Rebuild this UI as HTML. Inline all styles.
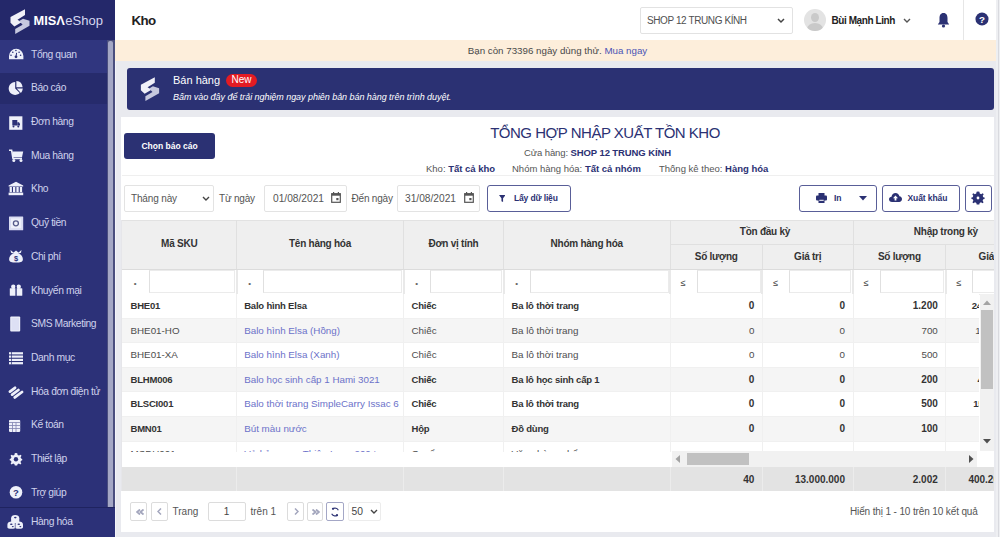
<!DOCTYPE html>
<html><head><meta charset="utf-8"><style>
*{box-sizing:border-box;margin:0;padding:0}
html,body{width:1000px;height:537px;overflow:hidden}
body{position:relative;background:#e9eaef;font-family:"Liberation Sans", sans-serif;color:#333;}
.abs{position:absolute}
#sb{position:absolute;left:0;top:0;width:115px;height:537px;background:#2c3178;overflow:hidden}
#sbh{position:absolute;left:0;top:0;width:115px;height:40px;background:#24286a}
.mi{position:absolute;left:0;width:107px;height:33.6px}
.mi .ic{position:absolute;left:7.7px;top:8.8px;width:16px;height:16px;line-height:0}
.mi .lb{position:absolute;left:31px;top:0.2px;line-height:33.6px;font-size:10.3px;letter-spacing:-0.4px;color:#cfd2ec;white-space:nowrap}
#sbscroll{position:absolute;left:107px;top:40px;width:7.7px;height:467px;background:#4a4e7e}
#sbthumb{position:absolute;left:107.6px;top:40.5px;width:5.4px;height:466.5px;background:#a4a7c5;border-radius:2px 2px 0 0}
#hdr{position:absolute;left:115px;top:0;width:885px;height:40px;background:#fff}
#trial{position:absolute;left:115px;top:40px;width:885px;height:21px;background:#fdeedb;font-size:9.75px;color:#4a4a4a;text-align:center;line-height:21px}
#banner{position:absolute;left:127px;top:68px;width:867px;height:42px;background:#2b3173;border-radius:3px}
#card{position:absolute;left:122px;top:117px;width:872px;height:415px;background:#fff}
.btnp{position:absolute;background:#2b3173;color:#fff;border-radius:3px;font-weight:bold;text-align:center}
.inp{position:absolute;border:1px solid #e3e3e3;border-radius:2px;background:#fff;font-size:10px;color:#555}
.obtn{position:absolute;border:1px solid #595e98;border-radius:3px;background:#fff;color:#2b3173;font-weight:bold;font-size:8.5px}
</style></head><body>
<div id="sb">
<div id="sbh"><div class="abs" style="left:10px;top:8.5px;line-height:0"><svg width="20" height="25" viewBox="10 8.5 20 25"><path d="M25 8.8 L25 14.6 L17.5 19.2 L21.5 21.8 L14.4 26 L10.5 22.2 L10.5 16.6 Z" fill="#f0f0f8"/><path d="M23 18.2 L29.5 20.3 L29.5 25.3 L15.2 33.4 L15.2 28.6 L22.6 24.2 L19.2 20.4 Z" fill="#c6c8de"/></svg></div>
<div class="abs" style="left:33.5px;top:12.5px;font-size:12.8px;color:#fff;line-height:16px;white-space:nowrap"><b>MISΛ</b><span style="font-size:13px;color:#d6d8f0;margin-left:0.5px">eShop</span></div></div>
<div class="abs" style="left:0;top:39.7px;width:107px;height:33.5px;background:#30367f"></div><div class="mi" style="top:37.5px;"><span class="ic"><svg width="16" height="16" viewBox="0 0 16 16"><path d="M1 13.3 V10 A7.2 7.2 0 0 1 15.4 10 V13.3 Z" fill="#eef0fa"/><circle cx="7.9" cy="4.5" r=".8" fill="#2c3178"/><circle cx="4.8" cy="6.3" r=".8" fill="#2c3178"/><circle cx="11.1" cy="6.3" r=".8" fill="#2c3178"/><circle cx="3" cy="9.3" r=".8" fill="#2c3178"/><circle cx="12.6" cy="9.3" r=".8" fill="#2c3178"/><circle cx="8" cy="10.8" r="1.4" fill="#2c3178"/><path d="M8 10.8 L8.6 6.8" stroke="#2c3178" stroke-width="1"/></svg></span><span class="lb">Tổng quan</span></div><div class="abs" style="left:0;top:73.2px;width:107px;height:30.5px;background:#262b6c"></div><div class="mi" style="top:71.2px;"><span class="ic"><svg width="16" height="16" viewBox="0 0 16 16"><path d="M7.2 1.9 A6.5 6.5 0 1 0 11.8 13 L7.2 8.4 Z" fill="#eef0fa"/><path d="M8.4 1.1 A6.8 6.8 0 0 1 14.6 7.3 L8.4 7.3 Z" fill="#eef0fa"/><path d="M8.8 8.6 L14.8 8.6 A6.8 6.8 0 0 1 12.9 12.9 Z" fill="#eef0fa"/></svg></span><span class="lb">Báo cáo</span></div><div class="mi" style="top:104.9px;"><span class="ic"><svg width="16" height="16" viewBox="0 0 16 16"><rect x="1.2" y="2.3" width="13.2" height="13.5" fill="#eef0fa"/><rect x="4.3" y="6" width="5" height="5.5" fill="#2c3178"/><path d="M9.3 8.3 H11 L12 10 V11.5 H9.3Z" fill="#2c3178"/><circle cx="5.5" cy="12.5" r="1" fill="#2c3178"/><circle cx="10.3" cy="12.5" r="1" fill="#2c3178"/></svg></span><span class="lb">Đơn hàng</span></div><div class="mi" style="top:138.6px;"><span class="ic"><svg width="16" height="16" viewBox="0 0 16 16"><path d="M1 3.2 H3.6 L5 11.5 H14" fill="none" stroke="#eef0fa" stroke-width="1.6"/><path d="M4.2 4.6 H15.2 L14 10.2 H5.1 Z" fill="#eef0fa"/><circle cx="5.8" cy="13.6" r="1.5" fill="#eef0fa"/><circle cx="13" cy="13.6" r="1.5" fill="#eef0fa"/></svg></span><span class="lb">Mua hàng</span></div><div class="mi" style="top:172.3px;"><span class="ic"><svg width="16" height="16" viewBox="0 0 16 16"><path d="M8 0.8 L15.2 4.6 V5.6 H0.6 V4.6 Z" fill="#eef0fa"/><rect x="1.6" y="6" width="2.3" height="5.2" fill="#eef0fa"/><rect x="5" y="6" width="2.3" height="5.2" fill="#eef0fa"/><rect x="8.4" y="6" width="2.3" height="5.2" fill="#eef0fa"/><rect x="11.8" y="6" width="2.3" height="5.2" fill="#eef0fa"/><rect x="0.6" y="11.6" width="14.6" height="2.6" fill="#eef0fa"/></svg></span><span class="lb">Kho</span></div><div class="mi" style="top:206.0px;"><span class="ic"><svg width="16" height="16" viewBox="0 0 16 16"><rect x="1" y="1.4" width="14.2" height="13.8" rx=".5" fill="#d9dcf2"/><rect x="3" y="3.4" width="10.2" height="9.8" fill="#eef0fa"/><circle cx="7.9" cy="8.3" r="2.5" fill="none" stroke="#555a8a" stroke-width="1.3"/></svg></span><span class="lb">Quỹ tiền</span></div><div class="mi" style="top:239.7px;"><span class="ic"><svg width="16" height="16" viewBox="0 0 16 16"><path d="M2.5 2 L5.5 4.5 L8 2.5 L10.5 4.5 L13.5 2 L13 4.8 L9.5 6 L6.5 6 L3 4.8 Z" fill="#eef0fa"/><path d="M5.5 5.5 C2 6.5 0.8 10 1.2 12 C1.6 14 3.5 14.5 8 14.5 C12.5 14.5 14.4 14 14.8 12 C15.2 10 14 6.5 10.5 5.5 Z" fill="#eef0fa"/><text x="8" y="13.2" font-size="7.5" text-anchor="middle" fill="#2c3178" font-family="Liberation Sans" font-weight="bold">$</text></svg></span><span class="lb">Chi phí</span></div><div class="mi" style="top:273.4px;"><span class="ic"><svg width="16" height="16" viewBox="0 0 16 16"><circle cx="5.3" cy="4.7" r="2.2" fill="#eef0fa"/><circle cx="10.7" cy="4.7" r="2.2" fill="#eef0fa"/><rect x="1.8" y="6.2" width="12.5" height="7.6" rx=".6" fill="#eef0fa"/><rect x="7.4" y="4.5" width="1.3" height="9.5" fill="#2c3178"/></svg></span><span class="lb">Khuyến mại</span></div><div class="mi" style="top:307.1px;"><span class="ic"><svg width="16" height="16" viewBox="0 0 16 16"><rect x="2.2" y="0.4" width="10" height="15.2" rx="1" fill="#eef0fa"/><rect x="3.4" y="1.8" width="7.6" height="12.6" fill="#dde0f4"/></svg></span><span class="lb">SMS Marketing</span></div><div class="mi" style="top:340.8px;"><span class="ic"><svg width="16" height="16" viewBox="0 0 16 16"><rect x="1" y="2.2" width="14" height="2.2" fill="#eef0fa"/><rect x="1" y="5.5" width="14" height="2.2" fill="#eef0fa"/><rect x="1" y="8.8" width="14" height="2.2" fill="#eef0fa"/><rect x="1" y="12.1" width="14" height="2.2" fill="#eef0fa"/><rect x="3.2" y="2" width=".7" height="12.5" fill="#2c3178"/></svg></span><span class="lb">Danh mục</span></div><div class="mi" style="top:374.5px;"><span class="ic"><svg width="16" height="16" viewBox="0 0 16 16"><path d="M2 8.6 L7 4.8 M4.2 11.6 L10.4 7 M6.8 14.4 L14 9" stroke="#eef0fa" stroke-width="2.8" stroke-linecap="round"/></svg></span><span class="lb">Hóa đơn điện tử</span></div><div class="mi" style="top:408.2px;"><span class="ic"><svg width="16" height="16" viewBox="0 0 16 16"><rect x="1" y="2.9" width="11.2" height="12" rx=".8" fill="#eef0fa"/><path d="M1 5.5 H12.2 M1 8.5 H12.2 M1 11.5 H12.2 M4.5 5.5 V15 M8 5.5 V15" stroke="#7d81b0" stroke-width=".8"/></svg></span><span class="lb">Kế toán</span></div><div class="mi" style="top:441.9px;"><span class="ic"><svg width="16" height="16" viewBox="0 0 16 16"><g transform="translate(1 1.3) scale(.87)"><path d="M8 0.8 L9.5 1 L9.9 3 L11.5 3.8 L13.3 2.7 L14.4 3.9 L13.3 5.6 L13.9 7.2 L15.2 7.6 L15.2 9.2 L13.9 9.6 L13.2 11.2 L14.2 12.9 L13 14 L11.3 13 L9.8 13.7 L9.4 15.2 L6.7 15.2 L6.3 13.7 L4.8 13 L3 14 L1.9 12.9 L2.9 11.2 L2.2 9.6 L0.8 9.2 L0.8 7.6 L2.2 7.2 L2.8 5.6 L1.8 3.9 L2.9 2.7 L4.6 3.8 L6.2 3 L6.6 1 Z" fill="#eef0fa"/><circle cx="8" cy="8" r="2.5" fill="#2c3178"/></g></svg></span><span class="lb">Thiết lập</span></div><div class="mi" style="top:475.6px;"><span class="ic"><svg width="16" height="16" viewBox="0 0 16 16"><circle cx="8" cy="8.3" r="6.3" fill="#eef0fa"/><text x="8" y="11.9" font-size="9.5" text-anchor="middle" fill="#2c3178" font-family="Liberation Sans" font-weight="bold">?</text></svg></span><span class="lb">Trợ giúp</span></div>
<div id="sbscroll"></div><div id="sbthumb"></div>
<div class="abs" style="left:0;top:507px;width:115px;height:1px;background:#1f2360"></div>
<div class="mi" style="top:508px;width:115px;height:29px;background:#2c3178"><span class="ic" style="left:7px;top:5.5px;width:16px"><svg width="16" height="16" viewBox="0 0 16 16"><path d="M8.2 1 C10.5 1 12.3 2 12.3 4.2 V7.5 C12.3 8.8 10.5 9 8.2 9 C5.9 9 4.1 8.8 4.1 7.5 V4.2 C4.1 2 5.9 1 8.2 1Z" fill="#eef0fa"/><path d="M4.5 7.5 C6.8 7.5 8.6 8.5 8.6 10.7 V13.2 C8.6 14.5 6.8 14.7 4.5 14.7 C2.2 14.7 0.4 14.5 0.4 13.2 V10.7 C0.4 8.5 2.2 7.5 4.5 7.5Z" fill="#eef0fa"/><path d="M12 7.5 C14.3 7.5 16 8.5 16 10.7 V13.2 C16 14.5 14.3 14.7 12 14.7 C9.7 14.7 7.9 14.5 7.9 13.2 V10.7 C7.9 8.5 9.7 7.5 12 7.5Z" fill="#eef0fa"/><ellipse cx="8.3" cy="3.6" rx="1.3" ry=".8" fill="#2c3178"/><ellipse cx="4.3" cy="10.3" rx="1.3" ry=".8" fill="#2c3178"/><ellipse cx="11.8" cy="10.3" rx="1.3" ry=".8" fill="#2c3178"/><ellipse cx="5.8" cy="12.6" rx="1" ry=".7" fill="#2c3178"/><ellipse cx="13.3" cy="12.6" rx="1" ry=".7" fill="#2c3178"/><path d="M8.25 9 V14.7" stroke="#2c3178" stroke-width=".6"/></svg></span><span class="lb" style="line-height:27px">Hàng hóa</span></div>
</div>
<div id="hdr">
<div class="abs" style="left:16.4px;top:13px;font-size:13.3px;font-weight:bold;color:#222;line-height:16px;letter-spacing:-0.5px">Kho</div>
<div class="abs" style="left:525px;top:7px;width:153px;height:27px;border:1px solid #e2e2e2;border-radius:2px"></div>
<div class="abs" style="left:532px;top:15px;font-size:10px;color:#505050;line-height:12px;letter-spacing:-0.4px;white-space:nowrap">SHOP 12 TRUNG KÍNH</div>
<svg class="abs" style="left:662px;top:18px" width="8" height="6" viewBox="0 0 8 6"><path d="M1 1 L4 4 L7 1" stroke="#444" stroke-width="1.5" fill="none"/></svg>
<div class="abs" style="left:689px;top:9px;width:22px;height:22px;border-radius:50%;background:#e3e3e3;overflow:hidden"><div class="abs" style="left:7px;top:4px;width:8px;height:9px;border-radius:50%;background:#c9c9c9"></div><div class="abs" style="left:3px;top:14px;width:16px;height:12px;border-radius:50%;background:#c9c9c9"></div></div>
<div class="abs" style="left:716.5px;top:14.5px;font-size:10px;font-weight:bold;color:#222;line-height:12px;white-space:nowrap;letter-spacing:-0.42px">Bùi Mạnh Linh</div>
<svg class="abs" style="left:788px;top:18px" width="8" height="6" viewBox="0 0 8 6"><path d="M1 1 L4 4 L7 1" stroke="#555" stroke-width="1.4" fill="none"/></svg>
<svg class="abs" style="left:822px;top:12px" width="13" height="16" viewBox="0 0 13 16"><path d="M6.5 1 C3.5 1 2.5 3.5 2.5 6 L2.5 10 L0.8 12.5 L12.2 12.5 L10.5 10 L10.5 6 C10.5 3.5 9.5 1 6.5 1Z" fill="#2b3173"/><circle cx="6.5" cy="14" r="1.6" fill="#2b3173"/></svg>
<div class="abs" style="left:848px;top:0;width:1px;height:40px;background:#e6e6e6"></div>
<svg class="abs" style="left:859.5px;top:12.3px" width="14" height="14" viewBox="0 0 15 15"><circle cx="7.5" cy="7.5" r="7" fill="#2b3173"/><text x="7.5" y="11.3" font-size="10.5" text-anchor="middle" fill="#fff" font-family="Liberation Sans" font-weight="bold">?</text></svg>
</div>
<div id="trial">Bạn còn 73396 ngày dùng thử. <span style="color:#4b55b5">Mua ngay</span></div>
<div id="banner">
<div class="abs" style="left:13px;top:9px;line-height:0"><svg width="20" height="24" viewBox="10 8.5 20 25"><path d="M25 8.8 L25 14.6 L17.5 19.2 L21.5 21.8 L14.4 26 L10.5 22.2 L10.5 16.6 Z" fill="#f0f0f8"/><path d="M23 18.2 L29.5 20.3 L29.5 25.3 L15.2 33.4 L15.2 28.6 L22.6 24.2 L19.2 20.4 Z" fill="#c6c8de"/></svg></div>
<div class="abs" style="left:46px;top:6px;font-size:11px;color:#fff;line-height:13px">Bán hàng</div>
<div class="abs" style="left:99px;top:6px;width:31px;height:12.5px;border-radius:7px;background:#e31b23;color:#fff;font-size:10px;line-height:12.5px;text-align:center">New</div>
<div class="abs" style="left:46px;top:23px;font-size:9px;font-style:italic;color:#fff;line-height:12px;white-space:nowrap;letter-spacing:-0.05px">Bấm vào đây để trải nghiệm ngay phiên bản bán hàng trên trình duyệt.</div>
</div>
<div class="abs" style="left:114.7px;top:61px;width:1.5px;height:476px;background:#f4f4f9"></div><div class="abs" style="left:120.5px;top:117.3px;width:873.5px;height:414.5px;background:#fff"></div><div class="abs" style="left:120.5px;top:220px;width:1.5px;height:271px;background:#e6e6ea"></div><div class="btnp" style="left:124px;top:133px;width:91px;height:26px;font-size:8.5px;line-height:26px">Chọn báo cáo</div><div class="abs" style="left:422px;top:124px;width:366px;text-align:center;font-size:15px;color:#2b3173;line-height:18px;letter-spacing:-0.5px;white-space:nowrap">TỔNG HỢP NHẬP XUẤT TỒN KHO</div><div class="abs" style="left:524px;top:147px;font-size:9.5px;color:#555;line-height:12px;white-space:nowrap;letter-spacing:-0.1px">Cửa hàng: <b style="color:#2b3173">SHOP 12 TRUNG KÍNH</b></div><div class="abs" style="left:426px;top:163px;font-size:9.5px;color:#555;line-height:12px;white-space:nowrap">Kho: <b style="color:#2b3173">Tất cả kho</b></div><div class="abs" style="left:512px;top:163px;font-size:9.5px;color:#555;line-height:12px;white-space:nowrap">Nhóm hàng hóa: <b style="color:#2b3173">Tất cả nhóm</b></div><div class="abs" style="left:659px;top:163px;font-size:9.5px;color:#555;line-height:12px;white-space:nowrap">Thống kê theo: <b style="color:#2b3173">Hàng hóa</b></div><div class="abs" style="left:122px;top:175px;width:872px;height:1px;background:#efefef"></div><div class="inp" style="left:124px;top:185px;width:90px;height:26.5px"></div><div class="abs" style="left:131px;top:193px;font-size:10px;color:#555;line-height:12px;white-space:nowrap;letter-spacing:-0.15px">Tháng này</div><svg class="abs" style="left:202px;top:196px" width="8" height="6" viewBox="0 0 8 6"><path d="M1 1 L4 4 L7 1" stroke="#444" stroke-width="1.4" fill="none"/></svg><div class="abs" style="left:219px;top:193px;font-size:10px;color:#555;line-height:12px;white-space:nowrap;letter-spacing:-0.2px">Từ ngày</div><div class="inp" style="left:264px;top:185px;width:83px;height:26.5px"></div><div class="abs" style="left:273px;top:193px;font-size:10.2px;color:#555;line-height:12px;white-space:nowrap">01/08/2021</div><svg class="abs" style="left:331px;top:192px" width="10" height="11" viewBox="0 0 10 11"><rect x="0.7" y="1.7" width="8.6" height="8.6" fill="none" stroke="#555" stroke-width="1.2"/><rect x="0.7" y="1.7" width="8.6" height="2" fill="#555"/><rect x="2" y="0" width="1.2" height="2" fill="#555"/><rect x="6.8" y="0" width="1.2" height="2" fill="#555"/><rect x="5.3" y="6" width="2.2" height="2.2" fill="#555"/></svg><div class="abs" style="left:351.5px;top:193px;font-size:10px;color:#555;line-height:12px;white-space:nowrap;letter-spacing:-0.2px">Đến ngày</div><div class="inp" style="left:397px;top:185px;width:83px;height:26.5px"></div><div class="abs" style="left:405px;top:193px;font-size:10.2px;color:#555;line-height:12px;white-space:nowrap">31/08/2021</div><svg class="abs" style="left:464px;top:192px" width="10" height="11" viewBox="0 0 10 11"><rect x="0.7" y="1.7" width="8.6" height="8.6" fill="none" stroke="#555" stroke-width="1.2"/><rect x="0.7" y="1.7" width="8.6" height="2" fill="#555"/><rect x="2" y="0" width="1.2" height="2" fill="#555"/><rect x="6.8" y="0" width="1.2" height="2" fill="#555"/><rect x="5.3" y="6" width="2.2" height="2.2" fill="#555"/></svg><div class="obtn" style="left:487px;top:185px;width:84px;height:27px"></div><svg class="abs" style="left:498.5px;top:195px" width="6.5" height="7.5" viewBox="0 0 8 9"><path d="M0 0 H8 L5 4 V8.5 L3 7.5 V4 Z" fill="#2b3173"/></svg><div class="abs" style="left:514px;top:192px;font-size:8.5px;font-weight:bold;color:#2b3173;line-height:12px;white-space:nowrap;letter-spacing:-0.15px">Lấy dữ liệu</div><div class="obtn" style="left:798.8px;top:185px;width:77.8px;height:26.5px"></div><svg class="abs" style="left:816px;top:193px" width="11" height="10" viewBox="0 0 11 10"><rect x="2.5" y="0" width="6" height="3" fill="#2b3173"/><rect x="0" y="2.5" width="11" height="5" rx="1" fill="#2b3173"/><rect x="2.5" y="6" width="6" height="4" fill="#2b3173"/><rect x="3.3" y="6.8" width="4.4" height="1" fill="#fff"/></svg><div class="abs" style="left:834px;top:192px;font-size:8.5px;font-weight:bold;color:#2b3173;line-height:12px">In</div><svg class="abs" style="left:859px;top:196px" width="8" height="5" viewBox="0 0 8 5"><path d="M0 0 H8 L4 4.5 Z" fill="#2b3173"/></svg><div class="obtn" style="left:882px;top:185px;width:78px;height:26.5px"></div><svg class="abs" style="left:889px;top:193px" width="13" height="9" viewBox="0 0 13 9"><path d="M3 9 C1 9 0 7.8 0 6.3 C0 4.8 1.2 3.8 2.5 3.8 C2.8 1.6 4.5 0 6.5 0 C8.6 0 10 1.4 10.4 3.2 C12 3.3 13 4.6 13 6.1 C13 7.7 11.8 9 10.2 9 Z" fill="#2b3173"/><path d="M6.5 2.5 L9 5.2 L7.4 5.2 L7.4 7.5 L5.6 7.5 L5.6 5.2 L4 5.2 Z" fill="#fff"/></svg><div class="abs" style="left:907.5px;top:192px;font-size:8.5px;font-weight:bold;color:#2b3173;line-height:12px;white-space:nowrap;letter-spacing:-0.1px">Xuất khẩu</div><div class="obtn" style="left:965px;top:185px;width:26.5px;height:26.5px"></div><svg class="abs" style="left:971px;top:191px" width="14" height="14" viewBox="0 0 16 16"><path d="M8 0.5 L9.6 0.8 L10 2.9 L11.6 3.6 L13.4 2.5 L14.5 3.7 L13.4 5.5 L14 7 L15.5 7.4 L15.5 9 L14 9.4 L13.3 11 L14.4 12.8 L13.2 14 L11.4 12.9 L9.9 13.6 L9.5 15.5 L6.5 15.5 L6.1 13.6 L4.6 12.9 L2.8 14 L1.6 12.8 L2.7 11 L2 9.4 L0.5 9 L0.5 7.4 L2 7 L2.6 5.5 L1.5 3.7 L2.6 2.5 L4.4 3.6 L6 2.9 L6.4 0.8 Z" fill="#2b3173"/><circle cx="8" cy="8" r="1.6" fill="#fff"/></svg><div class="abs" style="left:122px;top:220px;width:871.5px;height:271px;overflow:hidden"><div class="abs" style="left:0.00px;top:0.00px;width:978.00px;height:49.50px;background:#efefef"></div><div class="abs" style="left:0.00px;top:0.00px;width:978.00px;height:1.00px;background:#e2e2e2"></div><div class="abs" style="left:0.00px;width:114.50px;text-align:center;top:-1.00px;height:49.50px;line-height:49.50px;white-space:nowrap;font-size:10px;font-weight:bold;color:#333;letter-spacing:-0.25px">Mã SKU</div><div class="abs" style="left:114.00px;top:0.00px;width:1.00px;height:49.50px;background:#e0e0e0"></div><div class="abs" style="left:114.50px;width:167.00px;text-align:center;top:-1.00px;height:49.50px;line-height:49.50px;white-space:nowrap;font-size:10px;font-weight:bold;color:#333;letter-spacing:-0.25px">Tên hàng hóa</div><div class="abs" style="left:281.00px;top:0.00px;width:1.00px;height:49.50px;background:#e0e0e0"></div><div class="abs" style="left:281.50px;width:100.00px;text-align:center;top:-1.00px;height:49.50px;line-height:49.50px;white-space:nowrap;font-size:10px;font-weight:bold;color:#333;letter-spacing:-0.25px">Đơn vị tính</div><div class="abs" style="left:381.00px;top:0.00px;width:1.00px;height:49.50px;background:#e0e0e0"></div><div class="abs" style="left:381.50px;width:166.50px;text-align:center;top:-1.00px;height:49.50px;line-height:49.50px;white-space:nowrap;font-size:10px;font-weight:bold;color:#333;letter-spacing:-0.25px">Nhóm hàng hóa</div><div class="abs" style="left:547.50px;top:0.00px;width:1.00px;height:49.50px;background:#e0e0e0"></div><div class="abs" style="left:551.50px;width:183.00px;text-align:center;top:-0.50px;height:24.50px;line-height:24.50px;white-space:nowrap;font-size:10px;font-weight:bold;color:#333;letter-spacing:-0.25px">Tồn đầu kỳ</div><div class="abs" style="left:548.00px;top:24.00px;width:183.00px;height:1.00px;background:#e0e0e0"></div><div class="abs" style="left:730.50px;top:0.00px;width:1.00px;height:49.50px;background:#e0e0e0"></div><div class="abs" style="left:731.00px;width:185.60px;text-align:center;top:-0.50px;height:24.50px;line-height:24.50px;white-space:nowrap;font-size:10px;font-weight:bold;color:#333;letter-spacing:-0.25px">Nhập trong kỳ</div><div class="abs" style="left:731.00px;top:24.00px;width:185.60px;height:1.00px;background:#e0e0e0"></div><div class="abs" style="left:916.10px;top:0.00px;width:1.00px;height:49.50px;background:#e0e0e0"></div><div class="abs" style="left:548.00px;width:92.40px;text-align:center;top:24.00px;height:25.00px;line-height:25.00px;white-space:nowrap;font-size:10px;font-weight:bold;color:#333;letter-spacing:-0.25px">Số lượng</div><div class="abs" style="left:639.90px;top:24.50px;width:1.00px;height:25.00px;background:#e0e0e0"></div><div class="abs" style="left:640.40px;width:90.60px;text-align:center;top:24.00px;height:25.00px;line-height:25.00px;white-space:nowrap;font-size:10px;font-weight:bold;color:#333;letter-spacing:-0.25px">Giá trị</div><div class="abs" style="left:730.50px;top:24.50px;width:1.00px;height:25.00px;background:#e0e0e0"></div><div class="abs" style="left:731.00px;width:92.80px;text-align:center;top:24.00px;height:25.00px;line-height:25.00px;white-space:nowrap;font-size:10px;font-weight:bold;color:#333;letter-spacing:-0.25px">Số lượng</div><div class="abs" style="left:823.30px;top:24.50px;width:1.00px;height:25.00px;background:#e0e0e0"></div><div class="abs" style="left:823.80px;width:92.80px;text-align:center;top:24.00px;height:25.00px;line-height:25.00px;white-space:nowrap;font-size:10px;font-weight:bold;color:#333;letter-spacing:-0.25px">Giá trị</div><div class="abs" style="left:916.10px;top:24.50px;width:1.00px;height:25.00px;background:#e0e0e0"></div><div class="abs" style="left:0.00px;top:49.00px;width:978.00px;height:1.00px;background:#dcdcdc"></div><div class="abs" style="left:0.00px;top:50.00px;width:978.00px;height:24.00px;background:#fff"></div><div class="abs" style="left:26.50px;top:50.00px;width:86.50px;height:22.50px;border:1px solid #ebebeb;border-left:1.5px solid #e0e0e0;background:#fff"></div><div class="abs" style="left:113.50px;top:49.50px;width:2.00px;height:24.50px;background:#e9e9e9"></div><div class="abs" style="left:0.00px;width:26.50px;text-align:center;top:52.00px;height:23.50px;line-height:23.50px;white-space:nowrap;font-size:8px;color:#666">•</div><div class="abs" style="left:141.00px;top:50.00px;width:139.00px;height:22.50px;border:1px solid #ebebeb;border-left:1.5px solid #e0e0e0;background:#fff"></div><div class="abs" style="left:280.50px;top:49.50px;width:2.00px;height:24.50px;background:#e9e9e9"></div><div class="abs" style="left:114.50px;width:26.50px;text-align:center;top:52.00px;height:23.50px;line-height:23.50px;white-space:nowrap;font-size:8px;color:#666">•</div><div class="abs" style="left:308.00px;top:50.00px;width:72.00px;height:22.50px;border:1px solid #ebebeb;border-left:1.5px solid #e0e0e0;background:#fff"></div><div class="abs" style="left:380.50px;top:49.50px;width:2.00px;height:24.50px;background:#e9e9e9"></div><div class="abs" style="left:281.50px;width:26.50px;text-align:center;top:52.00px;height:23.50px;line-height:23.50px;white-space:nowrap;font-size:8px;color:#666">•</div><div class="abs" style="left:408.00px;top:50.00px;width:138.50px;height:22.50px;border:1px solid #ebebeb;border-left:1.5px solid #e0e0e0;background:#fff"></div><div class="abs" style="left:547.00px;top:49.50px;width:2.00px;height:24.50px;background:#e9e9e9"></div><div class="abs" style="left:381.50px;width:26.50px;text-align:center;top:52.00px;height:23.50px;line-height:23.50px;white-space:nowrap;font-size:8px;color:#666">•</div><div class="abs" style="left:574.50px;top:50.00px;width:64.40px;height:22.50px;border:1px solid #ebebeb;border-left:1.5px solid #e0e0e0;background:#fff"></div><div class="abs" style="left:639.40px;top:49.50px;width:2.00px;height:24.50px;background:#e9e9e9"></div><div class="abs" style="left:548.00px;width:26.50px;text-align:center;top:52.00px;height:23.50px;line-height:23.50px;white-space:nowrap;font-size:9px;color:#444">≤</div><div class="abs" style="left:666.90px;top:50.00px;width:62.60px;height:22.50px;border:1px solid #ebebeb;border-left:1.5px solid #e0e0e0;background:#fff"></div><div class="abs" style="left:730.00px;top:49.50px;width:2.00px;height:24.50px;background:#e9e9e9"></div><div class="abs" style="left:640.40px;width:26.50px;text-align:center;top:52.00px;height:23.50px;line-height:23.50px;white-space:nowrap;font-size:9px;color:#444">≤</div><div class="abs" style="left:757.50px;top:50.00px;width:64.80px;height:22.50px;border:1px solid #ebebeb;border-left:1.5px solid #e0e0e0;background:#fff"></div><div class="abs" style="left:822.80px;top:49.50px;width:2.00px;height:24.50px;background:#e9e9e9"></div><div class="abs" style="left:731.00px;width:26.50px;text-align:center;top:52.00px;height:23.50px;line-height:23.50px;white-space:nowrap;font-size:9px;color:#444">≤</div><div class="abs" style="left:850.30px;top:50.00px;width:64.80px;height:22.50px;border:1px solid #ebebeb;border-left:1.5px solid #e0e0e0;background:#fff"></div><div class="abs" style="left:915.60px;top:49.50px;width:2.00px;height:24.50px;background:#e9e9e9"></div><div class="abs" style="left:823.80px;width:26.50px;text-align:center;top:52.00px;height:23.50px;line-height:23.50px;white-space:nowrap;font-size:9px;color:#444">≤</div><div class="abs" style="left:0.00px;top:73.50px;width:978.00px;height:1.00px;background:#ececec"></div><div class="abs" style="left:0;top:74px;width:857px;height:158px;overflow:hidden"><div class="abs" style="left:0;top:0.00px;width:857px;height:24.60px;background:#fff;border-bottom:1px solid #f0f0f0"></div><div class="abs" style="left:114.00px;top:0.00px;width:1px;height:24.60px;background:#f0f0f0"></div><div class="abs" style="left:281.00px;top:0.00px;width:1px;height:24.60px;background:#f0f0f0"></div><div class="abs" style="left:381.00px;top:0.00px;width:1px;height:24.60px;background:#f0f0f0"></div><div class="abs" style="left:547.50px;top:0.00px;width:1px;height:24.60px;background:#f0f0f0"></div><div class="abs" style="left:639.90px;top:0.00px;width:1px;height:24.60px;background:#f0f0f0"></div><div class="abs" style="left:730.50px;top:0.00px;width:1px;height:24.60px;background:#f0f0f0"></div><div class="abs" style="left:823.30px;top:0.00px;width:1px;height:24.60px;background:#f0f0f0"></div><div class="abs" style="left:916.10px;top:0.00px;width:1px;height:24.60px;background:#f0f0f0"></div><div class="abs" style="left:8.50px;top:0.00px;height:24.60px;line-height:24.60px;white-space:nowrap;font-size:9.5px;font-weight:bold;color:#333;letter-spacing:-0.2px">BHE01</div><div class="abs" style="left:122.20px;top:0.00px;height:24.60px;line-height:24.60px;white-space:nowrap;font-size:9.5px;font-weight:bold;color:#333;letter-spacing:-0.2px">Balo hình Elsa</div><div class="abs" style="left:289.50px;top:0.00px;height:24.60px;line-height:24.60px;white-space:nowrap;font-size:9.5px;font-weight:bold;color:#333;letter-spacing:-0.2px">Chiếc</div><div class="abs" style="left:389.50px;top:0.00px;height:24.60px;line-height:24.60px;white-space:nowrap;font-size:9.5px;font-weight:bold;color:#333;letter-spacing:-0.2px">Ba lô thời trang</div><div class="abs" style="right:224.60px;top:0.00px;height:24.60px;line-height:24.60px;white-space:nowrap;font-size:10px;font-weight:bold;color:#333">0</div><div class="abs" style="right:134.00px;top:0.00px;height:24.60px;line-height:24.60px;white-space:nowrap;font-size:10px;font-weight:bold;color:#333">0</div><div class="abs" style="right:41.20px;top:0.00px;height:24.60px;line-height:24.60px;white-space:nowrap;font-size:10px;font-weight:bold;color:#333">1.200</div><div class="abs" style="left:849.70px;top:0.00px;height:24.60px;line-height:24.60px;white-space:nowrap;font-size:9.5px;font-weight:bold;color:#333;letter-spacing:-0.2px">240.000.000</div><div class="abs" style="left:0;top:24.60px;width:857px;height:24.60px;background:#f5f5f5;border-bottom:1px solid #f0f0f0"></div><div class="abs" style="left:114.00px;top:24.60px;width:1px;height:24.60px;background:#f0f0f0"></div><div class="abs" style="left:281.00px;top:24.60px;width:1px;height:24.60px;background:#f0f0f0"></div><div class="abs" style="left:381.00px;top:24.60px;width:1px;height:24.60px;background:#f0f0f0"></div><div class="abs" style="left:547.50px;top:24.60px;width:1px;height:24.60px;background:#f0f0f0"></div><div class="abs" style="left:639.90px;top:24.60px;width:1px;height:24.60px;background:#f0f0f0"></div><div class="abs" style="left:730.50px;top:24.60px;width:1px;height:24.60px;background:#f0f0f0"></div><div class="abs" style="left:823.30px;top:24.60px;width:1px;height:24.60px;background:#f0f0f0"></div><div class="abs" style="left:916.10px;top:24.60px;width:1px;height:24.60px;background:#f0f0f0"></div><div class="abs" style="left:8.50px;top:24.60px;height:24.60px;line-height:24.60px;white-space:nowrap;font-size:9.8px;font-weight:normal;color:#4d4d4d;letter-spacing:0">BHE01-HO</div><div class="abs" style="left:122.20px;top:24.60px;height:24.60px;line-height:24.60px;white-space:nowrap;font-size:9.8px;color:#6c72c9">Balo hình Elsa (Hồng)</div><div class="abs" style="left:289.50px;top:24.60px;height:24.60px;line-height:24.60px;white-space:nowrap;font-size:9.8px;font-weight:normal;color:#4d4d4d;letter-spacing:0">Chiếc</div><div class="abs" style="left:389.50px;top:24.60px;height:24.60px;line-height:24.60px;white-space:nowrap;font-size:9.8px;font-weight:normal;color:#4d4d4d;letter-spacing:0">Ba lô thời trang</div><div class="abs" style="right:224.60px;top:24.60px;height:24.60px;line-height:24.60px;white-space:nowrap;font-size:9.8px;font-weight:normal;color:#4d4d4d">0</div><div class="abs" style="right:134.00px;top:24.60px;height:24.60px;line-height:24.60px;white-space:nowrap;font-size:9.8px;font-weight:normal;color:#4d4d4d">0</div><div class="abs" style="right:41.20px;top:24.60px;height:24.60px;line-height:24.60px;white-space:nowrap;font-size:9.8px;font-weight:normal;color:#4d4d4d">700</div><div class="abs" style="left:853.30px;top:24.60px;height:24.60px;line-height:24.60px;white-space:nowrap;font-size:9.8px;font-weight:normal;color:#4d4d4d;letter-spacing:0">140.000.000</div><div class="abs" style="left:0;top:49.20px;width:857px;height:24.60px;background:#fff;border-bottom:1px solid #f0f0f0"></div><div class="abs" style="left:114.00px;top:49.20px;width:1px;height:24.60px;background:#f0f0f0"></div><div class="abs" style="left:281.00px;top:49.20px;width:1px;height:24.60px;background:#f0f0f0"></div><div class="abs" style="left:381.00px;top:49.20px;width:1px;height:24.60px;background:#f0f0f0"></div><div class="abs" style="left:547.50px;top:49.20px;width:1px;height:24.60px;background:#f0f0f0"></div><div class="abs" style="left:639.90px;top:49.20px;width:1px;height:24.60px;background:#f0f0f0"></div><div class="abs" style="left:730.50px;top:49.20px;width:1px;height:24.60px;background:#f0f0f0"></div><div class="abs" style="left:823.30px;top:49.20px;width:1px;height:24.60px;background:#f0f0f0"></div><div class="abs" style="left:916.10px;top:49.20px;width:1px;height:24.60px;background:#f0f0f0"></div><div class="abs" style="left:8.50px;top:49.20px;height:24.60px;line-height:24.60px;white-space:nowrap;font-size:9.8px;font-weight:normal;color:#4d4d4d;letter-spacing:0">BHE01-XA</div><div class="abs" style="left:122.20px;top:49.20px;height:24.60px;line-height:24.60px;white-space:nowrap;font-size:9.8px;color:#6c72c9">Balo hình Elsa (Xanh)</div><div class="abs" style="left:289.50px;top:49.20px;height:24.60px;line-height:24.60px;white-space:nowrap;font-size:9.8px;font-weight:normal;color:#4d4d4d;letter-spacing:0">Chiếc</div><div class="abs" style="left:389.50px;top:49.20px;height:24.60px;line-height:24.60px;white-space:nowrap;font-size:9.8px;font-weight:normal;color:#4d4d4d;letter-spacing:0">Ba lô thời trang</div><div class="abs" style="right:224.60px;top:49.20px;height:24.60px;line-height:24.60px;white-space:nowrap;font-size:9.8px;font-weight:normal;color:#4d4d4d">0</div><div class="abs" style="right:134.00px;top:49.20px;height:24.60px;line-height:24.60px;white-space:nowrap;font-size:9.8px;font-weight:normal;color:#4d4d4d">0</div><div class="abs" style="right:41.20px;top:49.20px;height:24.60px;line-height:24.60px;white-space:nowrap;font-size:9.8px;font-weight:normal;color:#4d4d4d">500</div><div class="abs" style="left:868.00px;top:49.20px;height:24.60px;line-height:24.60px;white-space:nowrap;font-size:9.8px;font-weight:normal;color:#4d4d4d;letter-spacing:0">00.000</div><div class="abs" style="left:0;top:73.80px;width:857px;height:24.60px;background:#f5f5f5;border-bottom:1px solid #f0f0f0"></div><div class="abs" style="left:114.00px;top:73.80px;width:1px;height:24.60px;background:#f0f0f0"></div><div class="abs" style="left:281.00px;top:73.80px;width:1px;height:24.60px;background:#f0f0f0"></div><div class="abs" style="left:381.00px;top:73.80px;width:1px;height:24.60px;background:#f0f0f0"></div><div class="abs" style="left:547.50px;top:73.80px;width:1px;height:24.60px;background:#f0f0f0"></div><div class="abs" style="left:639.90px;top:73.80px;width:1px;height:24.60px;background:#f0f0f0"></div><div class="abs" style="left:730.50px;top:73.80px;width:1px;height:24.60px;background:#f0f0f0"></div><div class="abs" style="left:823.30px;top:73.80px;width:1px;height:24.60px;background:#f0f0f0"></div><div class="abs" style="left:916.10px;top:73.80px;width:1px;height:24.60px;background:#f0f0f0"></div><div class="abs" style="left:8.50px;top:73.80px;height:24.60px;line-height:24.60px;white-space:nowrap;font-size:9.5px;font-weight:bold;color:#333;letter-spacing:-0.2px">BLHM006</div><div class="abs" style="left:122.20px;top:73.80px;height:24.60px;line-height:24.60px;white-space:nowrap;font-size:9.8px;color:#6c72c9">Balo học sinh cấp 1 Hami 3021</div><div class="abs" style="left:289.50px;top:73.80px;height:24.60px;line-height:24.60px;white-space:nowrap;font-size:9.5px;font-weight:bold;color:#333;letter-spacing:-0.2px">Chiếc</div><div class="abs" style="left:389.50px;top:73.80px;height:24.60px;line-height:24.60px;white-space:nowrap;font-size:9.5px;font-weight:bold;color:#333;letter-spacing:-0.2px">Ba lô học sinh cấp 1</div><div class="abs" style="right:224.60px;top:73.80px;height:24.60px;line-height:24.60px;white-space:nowrap;font-size:10px;font-weight:bold;color:#333">0</div><div class="abs" style="right:134.00px;top:73.80px;height:24.60px;line-height:24.60px;white-space:nowrap;font-size:10px;font-weight:bold;color:#333">0</div><div class="abs" style="right:41.20px;top:73.80px;height:24.60px;line-height:24.60px;white-space:nowrap;font-size:10px;font-weight:bold;color:#333">200</div><div class="abs" style="left:855.40px;top:73.80px;height:24.60px;line-height:24.60px;white-space:nowrap;font-size:9.5px;font-weight:bold;color:#333;letter-spacing:-0.2px">40.000.000</div><div class="abs" style="left:0;top:98.40px;width:857px;height:24.60px;background:#fff;border-bottom:1px solid #f0f0f0"></div><div class="abs" style="left:114.00px;top:98.40px;width:1px;height:24.60px;background:#f0f0f0"></div><div class="abs" style="left:281.00px;top:98.40px;width:1px;height:24.60px;background:#f0f0f0"></div><div class="abs" style="left:381.00px;top:98.40px;width:1px;height:24.60px;background:#f0f0f0"></div><div class="abs" style="left:547.50px;top:98.40px;width:1px;height:24.60px;background:#f0f0f0"></div><div class="abs" style="left:639.90px;top:98.40px;width:1px;height:24.60px;background:#f0f0f0"></div><div class="abs" style="left:730.50px;top:98.40px;width:1px;height:24.60px;background:#f0f0f0"></div><div class="abs" style="left:823.30px;top:98.40px;width:1px;height:24.60px;background:#f0f0f0"></div><div class="abs" style="left:916.10px;top:98.40px;width:1px;height:24.60px;background:#f0f0f0"></div><div class="abs" style="left:8.50px;top:98.40px;height:24.60px;line-height:24.60px;white-space:nowrap;font-size:9.5px;font-weight:bold;color:#333;letter-spacing:-0.2px">BLSCI001</div><div class="abs" style="left:122.20px;top:98.40px;height:24.60px;line-height:24.60px;white-space:nowrap;font-size:9.8px;color:#6c72c9">Balo thời trang SimpleCarry Issac 6</div><div class="abs" style="left:289.50px;top:98.40px;height:24.60px;line-height:24.60px;white-space:nowrap;font-size:9.5px;font-weight:bold;color:#333;letter-spacing:-0.2px">Chiếc</div><div class="abs" style="left:389.50px;top:98.40px;height:24.60px;line-height:24.60px;white-space:nowrap;font-size:9.5px;font-weight:bold;color:#333;letter-spacing:-0.2px">Ba lô thời trang</div><div class="abs" style="right:224.60px;top:98.40px;height:24.60px;line-height:24.60px;white-space:nowrap;font-size:10px;font-weight:bold;color:#333">0</div><div class="abs" style="right:134.00px;top:98.40px;height:24.60px;line-height:24.60px;white-space:nowrap;font-size:10px;font-weight:bold;color:#333">0</div><div class="abs" style="right:41.20px;top:98.40px;height:24.60px;line-height:24.60px;white-space:nowrap;font-size:10px;font-weight:bold;color:#333">500</div><div class="abs" style="left:851.20px;top:98.40px;height:24.60px;line-height:24.60px;white-space:nowrap;font-size:9.5px;font-weight:bold;color:#333;letter-spacing:-0.2px">150.000.000</div><div class="abs" style="left:0;top:123.00px;width:857px;height:24.60px;background:#f5f5f5;border-bottom:1px solid #f0f0f0"></div><div class="abs" style="left:114.00px;top:123.00px;width:1px;height:24.60px;background:#f0f0f0"></div><div class="abs" style="left:281.00px;top:123.00px;width:1px;height:24.60px;background:#f0f0f0"></div><div class="abs" style="left:381.00px;top:123.00px;width:1px;height:24.60px;background:#f0f0f0"></div><div class="abs" style="left:547.50px;top:123.00px;width:1px;height:24.60px;background:#f0f0f0"></div><div class="abs" style="left:639.90px;top:123.00px;width:1px;height:24.60px;background:#f0f0f0"></div><div class="abs" style="left:730.50px;top:123.00px;width:1px;height:24.60px;background:#f0f0f0"></div><div class="abs" style="left:823.30px;top:123.00px;width:1px;height:24.60px;background:#f0f0f0"></div><div class="abs" style="left:916.10px;top:123.00px;width:1px;height:24.60px;background:#f0f0f0"></div><div class="abs" style="left:8.50px;top:123.00px;height:24.60px;line-height:24.60px;white-space:nowrap;font-size:9.5px;font-weight:bold;color:#333;letter-spacing:-0.2px">BMN01</div><div class="abs" style="left:122.20px;top:123.00px;height:24.60px;line-height:24.60px;white-space:nowrap;font-size:9.8px;color:#6c72c9">Bút màu nước</div><div class="abs" style="left:289.50px;top:123.00px;height:24.60px;line-height:24.60px;white-space:nowrap;font-size:9.5px;font-weight:bold;color:#333;letter-spacing:-0.2px">Hộp</div><div class="abs" style="left:389.50px;top:123.00px;height:24.60px;line-height:24.60px;white-space:nowrap;font-size:9.5px;font-weight:bold;color:#333;letter-spacing:-0.2px">Đồ dùng</div><div class="abs" style="right:224.60px;top:123.00px;height:24.60px;line-height:24.60px;white-space:nowrap;font-size:10px;font-weight:bold;color:#333">0</div><div class="abs" style="right:134.00px;top:123.00px;height:24.60px;line-height:24.60px;white-space:nowrap;font-size:10px;font-weight:bold;color:#333">0</div><div class="abs" style="right:41.20px;top:123.00px;height:24.60px;line-height:24.60px;white-space:nowrap;font-size:10px;font-weight:bold;color:#333">100</div><div class="abs" style="left:868.00px;top:123.00px;height:24.60px;line-height:24.60px;white-space:nowrap;font-size:9.5px;font-weight:bold;color:#333;letter-spacing:-0.2px">000.000</div><div class="abs" style="left:0;top:147.60px;width:857px;height:24.60px;background:#fff;border-bottom:1px solid #f0f0f0"></div><div class="abs" style="left:114.00px;top:147.60px;width:1px;height:24.60px;background:#f0f0f0"></div><div class="abs" style="left:281.00px;top:147.60px;width:1px;height:24.60px;background:#f0f0f0"></div><div class="abs" style="left:381.00px;top:147.60px;width:1px;height:24.60px;background:#f0f0f0"></div><div class="abs" style="left:547.50px;top:147.60px;width:1px;height:24.60px;background:#f0f0f0"></div><div class="abs" style="left:639.90px;top:147.60px;width:1px;height:24.60px;background:#f0f0f0"></div><div class="abs" style="left:730.50px;top:147.60px;width:1px;height:24.60px;background:#f0f0f0"></div><div class="abs" style="left:823.30px;top:147.60px;width:1px;height:24.60px;background:#f0f0f0"></div><div class="abs" style="left:916.10px;top:147.60px;width:1px;height:24.60px;background:#f0f0f0"></div><div class="abs" style="left:8.50px;top:147.60px;height:24.60px;line-height:24.60px;white-space:nowrap;font-size:9.8px;font-weight:normal;color:#4d4d4d;letter-spacing:0">MSDH001</div><div class="abs" style="left:122.20px;top:147.60px;height:24.60px;line-height:24.60px;white-space:nowrap;font-size:9.8px;color:#6c72c9">Vở kẻ ngang Thiên Long 200 trang</div><div class="abs" style="left:289.50px;top:147.60px;height:24.60px;line-height:24.60px;white-space:nowrap;font-size:9.8px;font-weight:normal;color:#4d4d4d;letter-spacing:0">Quyển</div><div class="abs" style="left:389.50px;top:147.60px;height:24.60px;line-height:24.60px;white-space:nowrap;font-size:9.8px;font-weight:normal;color:#4d4d4d;letter-spacing:0">Văn phòng phẩm</div><div class="abs" style="right:224.60px;top:147.60px;height:24.60px;line-height:24.60px;white-space:nowrap;font-size:9.8px;font-weight:normal;color:#4d4d4d">11</div><div class="abs" style="right:134.00px;top:147.60px;height:24.60px;line-height:24.60px;white-space:nowrap;font-size:9.8px;font-weight:normal;color:#4d4d4d">2.000.000</div><div class="abs" style="right:41.20px;top:147.60px;height:24.60px;line-height:24.60px;white-space:nowrap;font-size:9.8px;font-weight:normal;color:#4d4d4d">1</div><div class="abs" style="left:868.00px;top:147.60px;height:24.60px;line-height:24.60px;white-space:nowrap;font-size:9.8px;font-weight:normal;color:#4d4d4d;letter-spacing:0">000</div></div><div class="abs" style="left:0.00px;top:232.00px;width:978.00px;height:15.00px;background:#fff"></div><div class="abs" style="left:550.00px;top:231.00px;width:305.00px;height:16.00px;background:#f1f1f1"></div><svg class="abs" style="left:553px;top:235px" width="6" height="8" viewBox="0 0 6 8"><path d="M5 0 V8 L0.5 4 Z" fill="#a3a3a3"/></svg><div class="abs" style="left:565.00px;top:233.00px;width:62.00px;height:12.00px;background:#c1c1c1"></div><svg class="abs" style="left:846px;top:235px" width="6" height="8" viewBox="0 0 6 8"><path d="M1 0 V8 L5.5 4 Z" fill="#505050"/></svg><div class="abs" style="left:857.50px;top:74.00px;width:14.00px;height:157.00px;background:#f1f1f1"></div><svg class="abs" style="left:860.5px;top:79.5px" width="8" height="5" viewBox="0 0 8 5"><path d="M0 5 H8 L4 0.5 Z" fill="#a3a3a3"/></svg><div class="abs" style="left:858.50px;top:89.50px;width:12.00px;height:79.50px;background:#c1c1c1"></div><svg class="abs" style="left:860.5px;top:219px" width="8" height="5" viewBox="0 0 8 5"><path d="M0 0 H8 L4 4.5 Z" fill="#505050"/></svg><div class="abs" style="left:0.00px;top:247.00px;width:978.00px;height:24.00px;background:#e3e3e3"></div><div class="abs" style="left:114.00px;top:247.00px;width:1.00px;height:24.00px;background:#ececec"></div><div class="abs" style="left:281.00px;top:247.00px;width:1.00px;height:24.00px;background:#ececec"></div><div class="abs" style="left:381.00px;top:247.00px;width:1.00px;height:24.00px;background:#ececec"></div><div class="abs" style="left:547.50px;top:247.00px;width:1.00px;height:24.00px;background:#ececec"></div><div class="abs" style="left:639.90px;top:247.00px;width:1.00px;height:24.00px;background:#ececec"></div><div class="abs" style="left:730.50px;top:247.00px;width:1.00px;height:24.00px;background:#ececec"></div><div class="abs" style="left:823.30px;top:247.00px;width:1.00px;height:24.00px;background:#ececec"></div><div class="abs" style="left:916.10px;top:247.00px;width:1.00px;height:24.00px;background:#ececec"></div><div class="abs" style="right:239.10px;top:248px;height:24px;line-height:24px;white-space:nowrap;font-size:10px;font-weight:bold;color:#333">40</div><div class="abs" style="right:148.50px;top:248px;height:24px;line-height:24px;white-space:nowrap;font-size:10px;font-weight:bold;color:#333">13.000.000</div><div class="abs" style="right:55.70px;top:248px;height:24px;line-height:24px;white-space:nowrap;font-size:10px;font-weight:bold;color:#333">2.002</div><div class="abs" style="right:-30.50px;top:248px;height:24px;line-height:24px;white-space:nowrap;font-size:10px;font-weight:bold;color:#333">400.200.000</div></div><div class="abs" style="left:130.3px;top:502.3px;width:17px;height:18.3px;border:1px solid #dcdcdc;border-radius:2px;background:#fff;"></div><div class="abs" style="left:150.6px;top:502.3px;width:17px;height:18.3px;border:1px solid #dcdcdc;border-radius:2px;background:#fff;"></div><svg class="abs" style="left:135.5px;top:508.5px" width="8" height="6" viewBox="0 0 8 6"><path d="M4 0.5 L1 3 L4 5.5 M7.5 0.5 L4.5 3 L7.5 5.5" stroke="#a3a6bd" stroke-width="1.8" fill="none"/></svg><svg class="abs" style="left:156.5px;top:508px" width="5" height="7" viewBox="0 0 5 7"><path d="M4 0.5 L1 3.5 L4 6.5" stroke="#a3a6bd" stroke-width="1.5" fill="none"/></svg><div class="abs" style="left:172.5px;top:505px;font-size:10px;color:#555;line-height:13px">Trang</div><div class="abs" style="left:207.5px;top:502.3px;width:38px;height:18.3px;border:1px solid #dcdcdc;border-radius:2px;background:#fff;"></div><div class="abs" style="left:207.5px;top:502px;width:38px;height:19px;line-height:19px;text-align:center;font-size:10px;color:#444">1</div><div class="abs" style="left:250.5px;top:505px;font-size:10px;color:#555;line-height:13px">trên 1</div><div class="abs" style="left:286.7px;top:502.3px;width:17.3px;height:18.3px;border:1px solid #dcdcdc;border-radius:2px;background:#fff;"></div><div class="abs" style="left:306.5px;top:502.3px;width:16.6px;height:18.3px;border:1px solid #dcdcdc;border-radius:2px;background:#fff;"></div><svg class="abs" style="left:293.5px;top:508px" width="5" height="7" viewBox="0 0 5 7"><path d="M1 0.5 L4 3.5 L1 6.5" stroke="#a3a6bd" stroke-width="1.5" fill="none"/></svg><svg class="abs" style="left:311.5px;top:508.5px" width="8" height="6" viewBox="0 0 8 6"><path d="M0.5 0.5 L3.5 3 L0.5 5.5 M4 0.5 L7 3 L4 5.5" stroke="#a3a6bd" stroke-width="1.8" fill="none"/></svg><div class="abs" style="left:325.5px;top:502.3px;width:18px;height:18.3px;border:1px solid #dcdcdc;border-radius:2px;background:#fff;border-color:#a4a7c6"></div><svg class="abs" style="left:329.5px;top:506.5px" width="10" height="10" viewBox="0 0 10 10"><path d="M8.3 3.2 A3.8 3.8 0 0 0 3 1.6" fill="none" stroke="#2b3173" stroke-width="1.1"/><path d="M1.7 6.8 A3.8 3.8 0 0 0 7 8.4" fill="none" stroke="#2b3173" stroke-width="1.1"/><circle cx="3" cy="1.8" r="1.1" fill="#2b3173"/><circle cx="7" cy="8.2" r="1.1" fill="#2b3173"/></svg><div class="abs" style="left:347.6px;top:502.3px;width:33.2px;height:18.3px;border:1px solid #dcdcdc;border-radius:2px;background:#fff;border-color:#ececec"></div><div class="abs" style="left:351.5px;top:505px;font-size:10.3px;color:#444;line-height:13px">50</div><svg class="abs" style="left:369.5px;top:509px" width="8" height="6" viewBox="0 0 8 6"><path d="M1 1 L4 4 L7 1" stroke="#444" stroke-width="1.4" fill="none"/></svg><div class="abs" style="left:995.5px;top:0;width:4.5px;height:537px;background:#eeeff2"></div><div class="abs" style="left:998px;top:0;width:1px;height:537px;background:#d9dadf"></div><div class="abs" style="left:850px;top:505px;font-size:10px;color:#555;line-height:13px;white-space:nowrap;letter-spacing:-0.13px">Hiển thị 1 - 10 trên 10 kết quả</div></body></html>
